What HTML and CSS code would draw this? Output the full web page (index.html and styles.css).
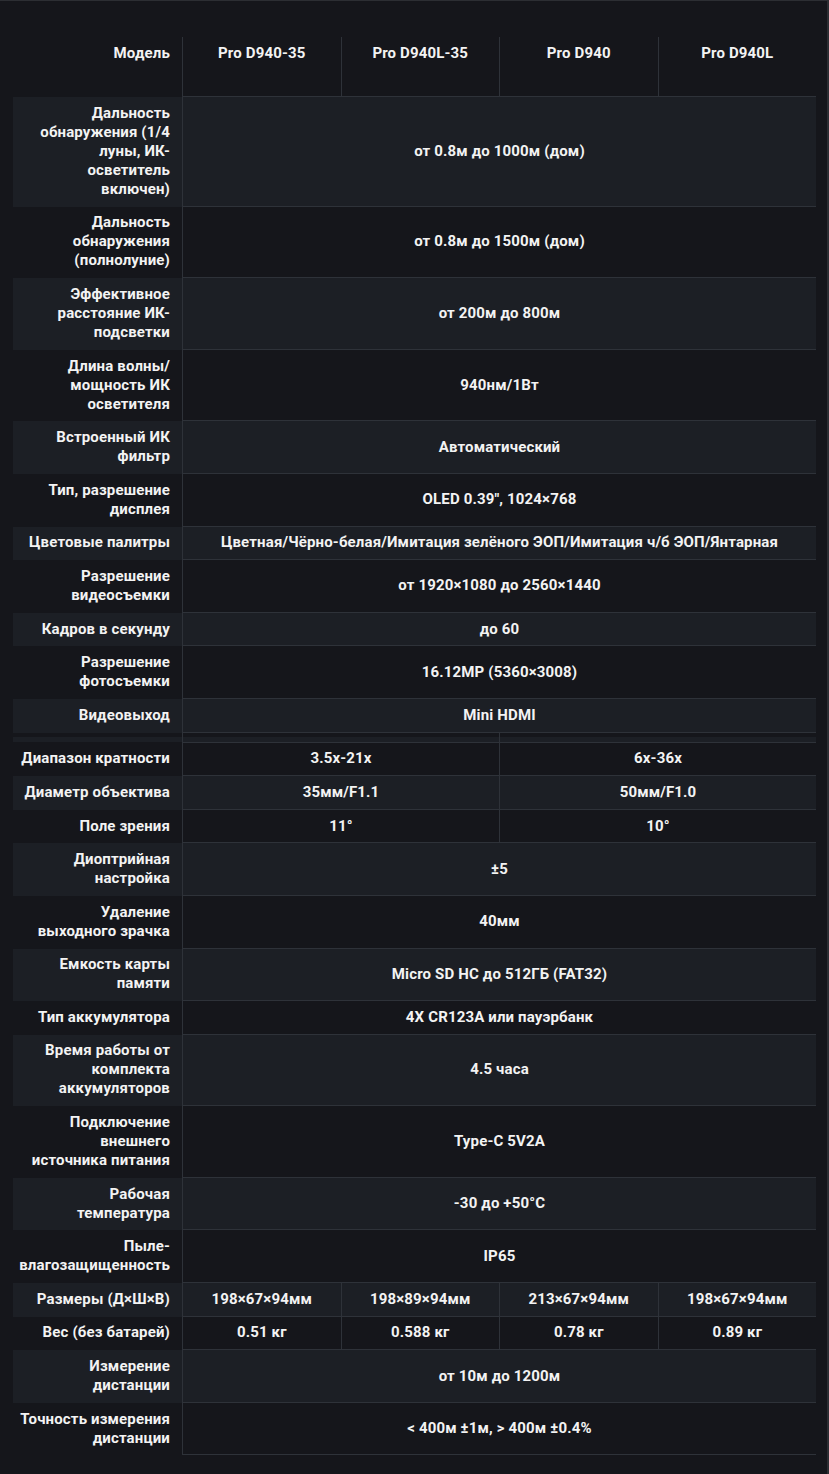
FILE: index.html
```html
<!DOCTYPE html>
<html lang="ru">
<head>
<meta charset="utf-8">
<title>Характеристики</title>
<link rel="stylesheet" href="styles.css">
</head>
<body>
<table class="spec">
  <colgroup>
    <col class="c-label"><col class="c-val"><col class="c-val"><col class="c-val"><col class="c-val">
  </colgroup>
  <thead>
    <tr>
      <th class="lbl head">Модель</th>
      <th class="val head">Pro D940-35</th>
      <th class="val head">Pro D940L-35</th>
      <th class="val head">Pro D940</th>
      <th class="val head">Pro D940L</th>
    </tr>
  </thead>
  <tbody>
    <tr class="s"><th class="lbl">Дальность<br>обнаружения (1/4<br>луны, ИК-<br>осветитель<br>включен)</th><td class="val" colspan="4">от 0.8м до 1000м (дом)</td></tr>
    <tr><th class="lbl">Дальность<br>обнаружения<br>(полнолуние)</th><td class="val" colspan="4">от 0.8м до 1500м (дом)</td></tr>
    <tr class="s"><th class="lbl">Эффективное<br>расстояние ИК-<br>подсветки</th><td class="val" colspan="4">от 200м до 800м</td></tr>
    <tr><th class="lbl">Длина волны/<br>мощность ИК<br>осветителя</th><td class="val" colspan="4">940нм/1Вт</td></tr>
    <tr class="s"><th class="lbl">Встроенный ИК<br>фильтр</th><td class="val" colspan="4">Автоматический</td></tr>
    <tr><th class="lbl">Тип, разрешение<br>дисплея</th><td class="val" colspan="4">OLED 0.39", 1024×768</td></tr>
    <tr class="s"><th class="lbl">Цветовые палитры</th><td class="val" colspan="4">Цветная/Чёрно-белая/Имитация зелёного ЭОП/Имитация ч/б ЭОП/Янтарная</td></tr>
    <tr><th class="lbl">Разрешение<br>видеосъемки</th><td class="val" colspan="4">от 1920×1080 до 2560×1440</td></tr>
    <tr class="s"><th class="lbl">Кадров в секунду</th><td class="val" colspan="4">до 60</td></tr>
    <tr><th class="lbl">Разрешение<br>фотосъемки</th><td class="val" colspan="4">16.12MP (5360×3008)</td></tr>
    <tr class="s"><th class="lbl">Видеовыход</th><td class="val" colspan="4">Mini HDMI</td></tr>
    <tr class="gap"><th class="lbl"></th><td class="val" colspan="2"></td><td class="val" colspan="2"></td></tr>
    <tr><th class="lbl">Диапазон кратности</th><td class="val" colspan="2">3.5x-21x</td><td class="val" colspan="2">6x-36x</td></tr>
    <tr class="s"><th class="lbl">Диаметр объектива</th><td class="val" colspan="2">35мм/F1.1</td><td class="val" colspan="2">50мм/F1.0</td></tr>
    <tr><th class="lbl">Поле зрения</th><td class="val" colspan="2">11°</td><td class="val" colspan="2">10°</td></tr>
    <tr class="s"><th class="lbl">Диоптрийная<br>настройка</th><td class="val" colspan="4">±5</td></tr>
    <tr><th class="lbl">Удаление<br>выходного зрачка</th><td class="val" colspan="4">40мм</td></tr>
    <tr class="s"><th class="lbl">Емкость карты<br>памяти</th><td class="val" colspan="4">Micro SD HC до 512ГБ (FAT32)</td></tr>
    <tr><th class="lbl">Тип аккумулятора</th><td class="val" colspan="4">4X CR123A или пауэрбанк</td></tr>
    <tr class="s"><th class="lbl">Время работы от<br>комплекта<br>аккумуляторов</th><td class="val" colspan="4">4.5 часа</td></tr>
    <tr><th class="lbl">Подключение<br>внешнего<br>источника питания</th><td class="val" colspan="4">Type-C 5V2A</td></tr>
    <tr class="s"><th class="lbl">Рабочая<br>температура</th><td class="val" colspan="4">-30 до +50°C</td></tr>
    <tr><th class="lbl">Пыле-<br>влагозащищенность</th><td class="val" colspan="4">IP65</td></tr>
    <tr class="s"><th class="lbl">Размеры (Д×Ш×В)</th><td class="val">198×67×94мм</td><td class="val">198×89×94мм</td><td class="val">213×67×94мм</td><td class="val">198×67×94мм</td></tr>
    <tr><th class="lbl">Вес (без батарей)</th><td class="val">0.51 кг</td><td class="val">0.588 кг</td><td class="val">0.78 кг</td><td class="val">0.89 кг</td></tr>
    <tr class="s"><th class="lbl">Измерение<br>дистанции</th><td class="val" colspan="4">от 10м до 1200м</td></tr>
    <tr><th class="lbl">Точность измерения<br>дистанции</th><td class="val" colspan="4">&lt; 400м ±1м, &gt; 400м ±0.4%</td></tr>
  </tbody>
</table>
</body>
</html>
```
FILE: styles.css
```css
html, body {
  margin: 0;
  padding: 0;
}
body {
  background: #15161b;
  color: #f3f3f3;
  font-family: Roboto, "Noto Sans", "DejaVu Sans", sans-serif;
  font-weight: 700;
  font-size: 15px;
  letter-spacing: 0.15px;
  line-height: 19px;
  min-height: 1474px;
  box-sizing: border-box;
  border-top: 1px solid #2c2e33;
  border-right: 2px solid #2c2e33;
  padding: 36px 13px 0 13px;
}
.spec {
  width: 803px;
  table-layout: fixed;
  border-collapse: separate;
  border-spacing: 0;
}
.c-label { width: 169px; }
.c-val { width: 158.5px; }

.spec th, .spec td {
  padding: 6.8px 6px;
  vertical-align: middle;
  font-weight: 700;
}
.spec .lbl {
  text-align: right;
  white-space: nowrap;
  padding-left: 0;
  padding-right: 12px;
  border-bottom: 1px solid transparent;
}
.spec .val {
  text-align: center;
  border-left: 1px solid #2e3239;
  border-bottom: 1px solid #2e3239;
}
.spec .head {
  vertical-align: top;
  height: 45px;
  padding-top: 7px;
  padding-bottom: 7px;
  box-sizing: content-box;
}
.spec .s th, .spec .s td {
  background: #1c1f25;
}
.spec .gap th, .spec .gap td {
  padding: 0;
  height: 10px;
  box-sizing: border-box;
  background: linear-gradient(#15161b 0, #15161b 4px, #1c1f25 4px);
}
```
